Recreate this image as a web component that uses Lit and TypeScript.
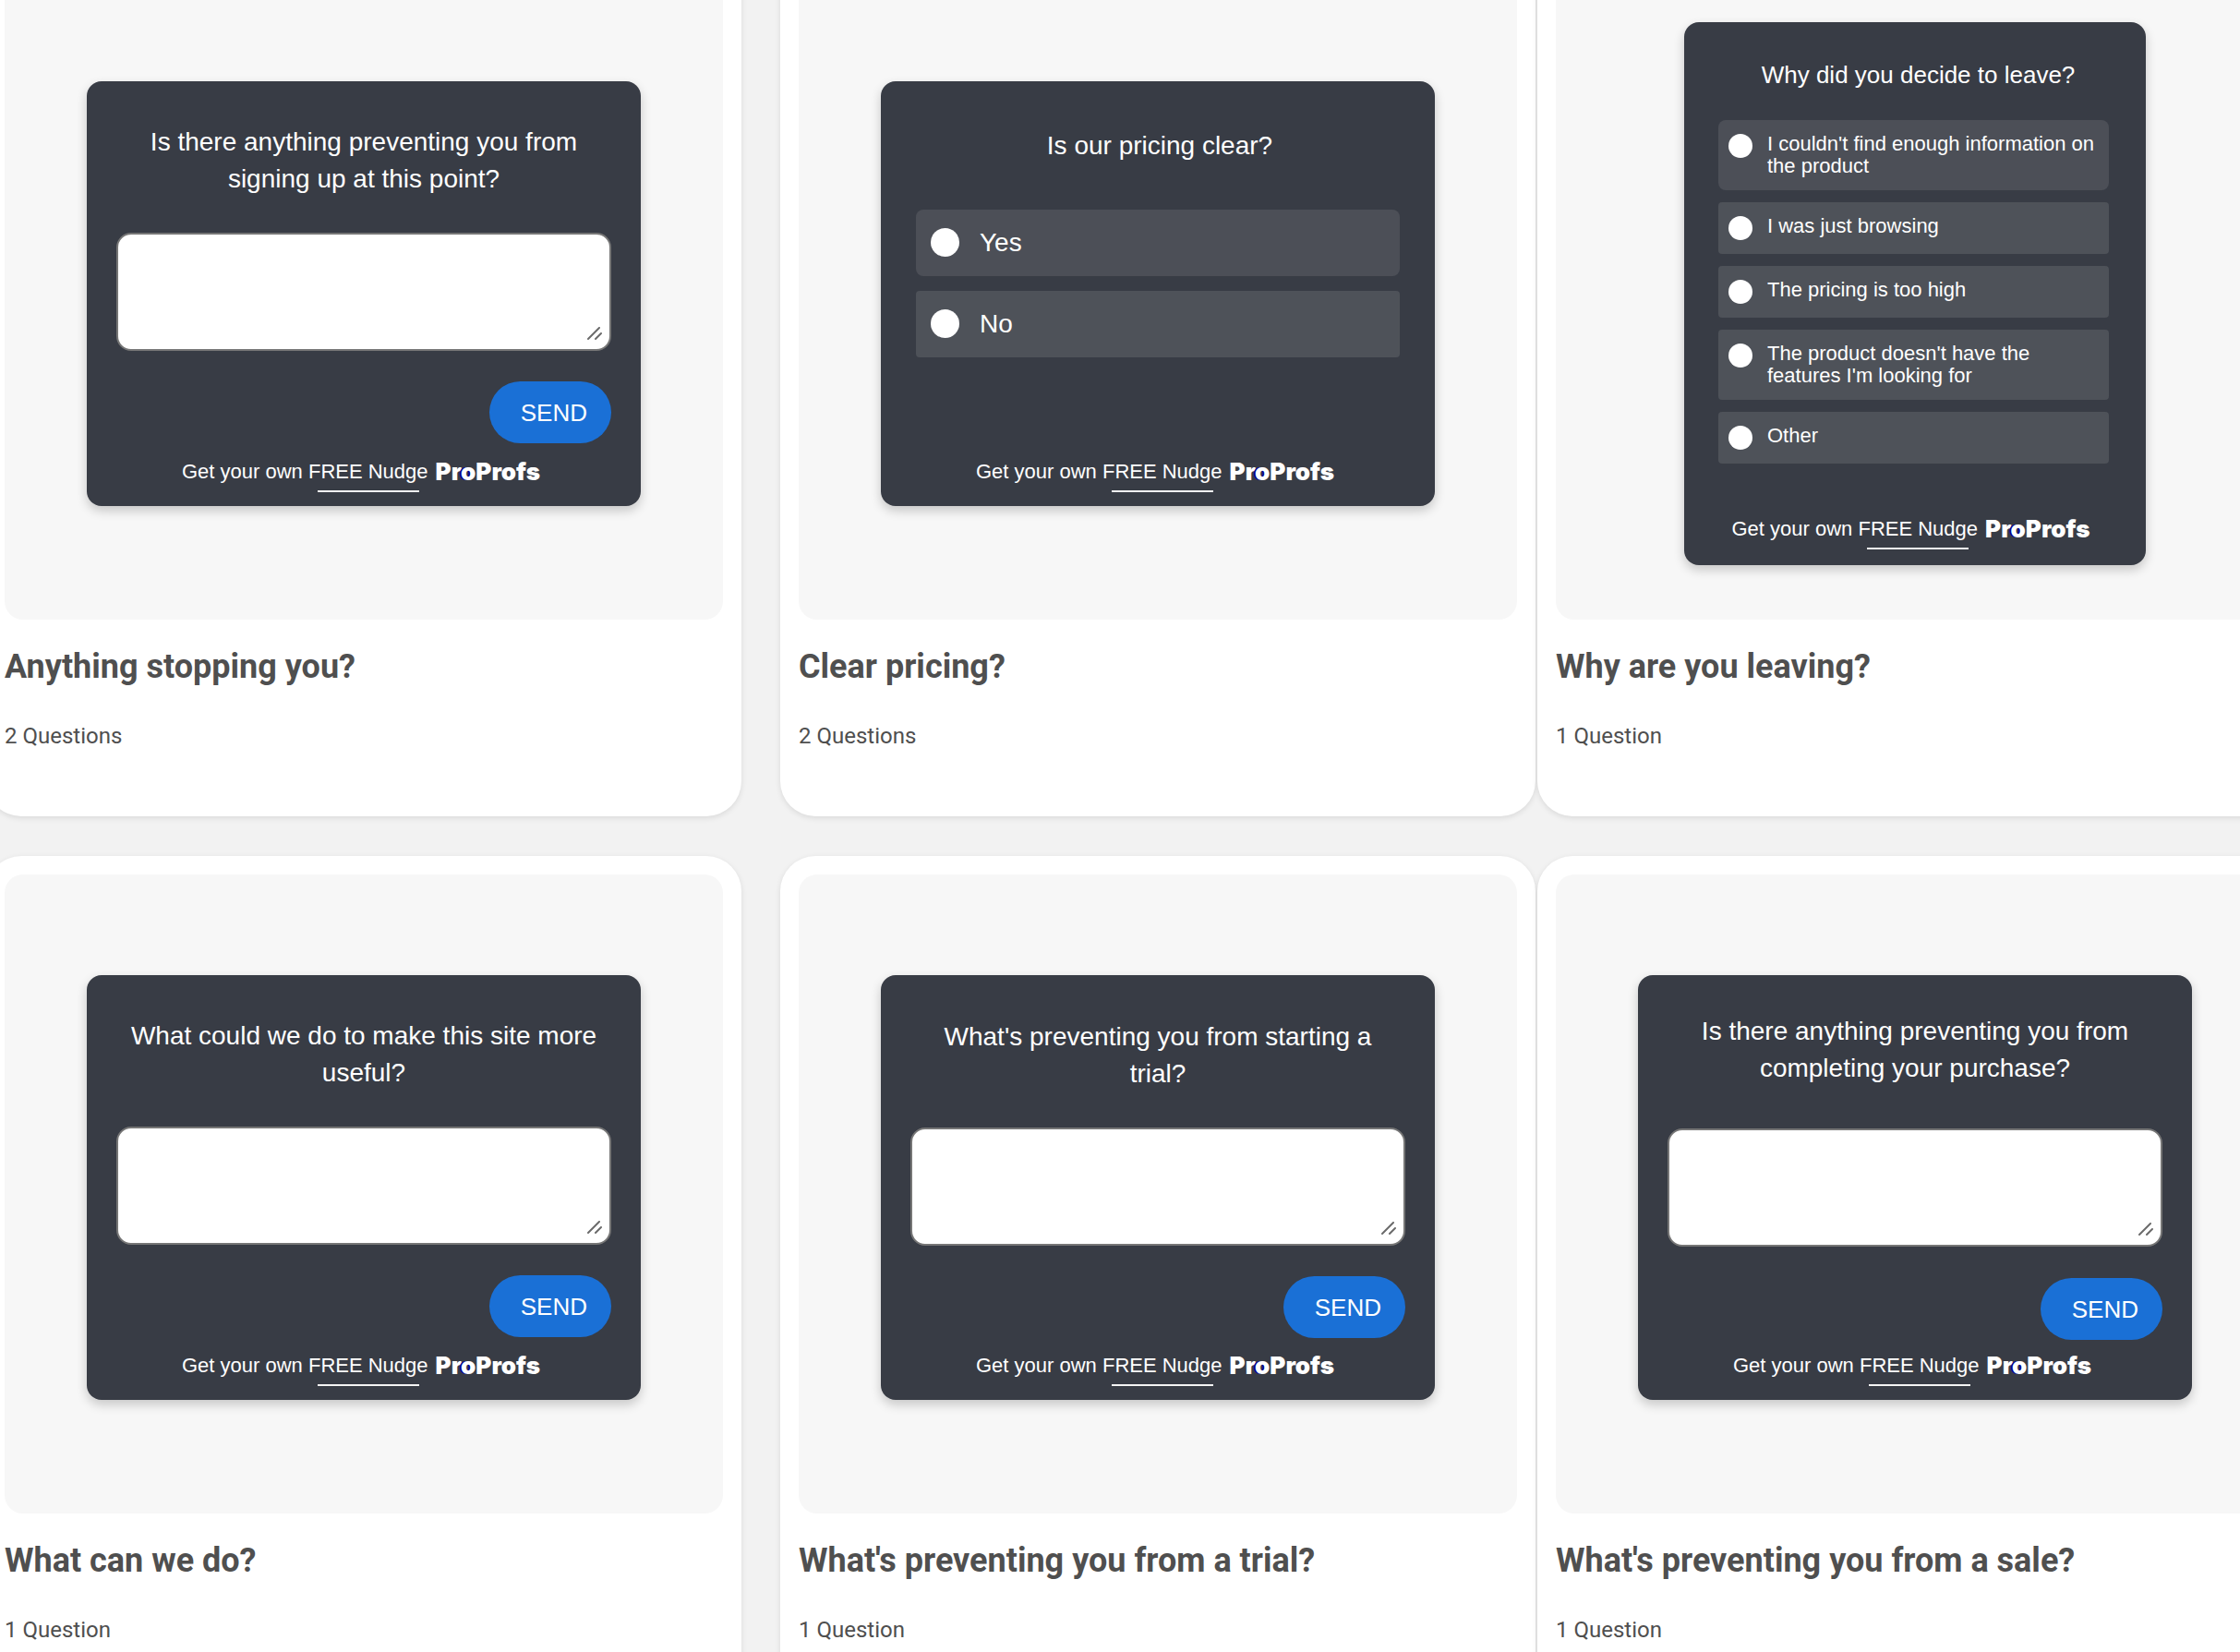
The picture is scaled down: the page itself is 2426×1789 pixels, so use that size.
import { LitElement, html, css } from "lit";
import { customElement, property } from "lit/decorators.js";
import { classMap } from "lit/directives/class-map.js";

interface Template {
  id: string;
  title: string;
  count: string;
  question: string;
  variant?: "high" | "low" | "compact" | "choice";
  options?: string[];
}

const TEMPLATES: Template[] = [
  {
    id: "stopping",
    title: "Anything stopping you?",
    count: "2 Questions",
    question: "Is there anything preventing you from signing up at this point?",
  },
  {
    id: "pricing",
    title: "Clear pricing?",
    count: "2 Questions",
    question: "Is our pricing clear?",
    variant: "choice",
    options: ["Yes", "No"],
  },
  {
    id: "leaving",
    title: "Why are you leaving?",
    count: "1 Question",
    question: "Why did you decide to leave?",
    variant: "compact",
    options: [
      "I couldn't find enough information on the product",
      "I was just browsing",
      "The pricing is too high",
      "The product doesn't have the features I'm looking for",
      "Other",
    ],
  },
  {
    id: "useful",
    title: "What can we do?",
    count: "1 Question",
    question: "What could we do to make this site more useful?",
  },
  {
    id: "trial",
    title: "What's preventing you from a trial?",
    count: "1 Question",
    question: "What's preventing you from starting a trial?",
    variant: "low",
  },
  {
    id: "sale",
    title: "What's preventing you from a sale?",
    count: "1 Question",
    question: "Is there anything preventing you from completing your purchase?",
    variant: "high",
  },
];

@customElement("nudge-popup")
export class NudgePopup extends LitElement {
  @property({ attribute: false }) template!: Template;

  static styles = css`
    :host {
      display: block;
    }
    .popup {
      box-sizing: border-box;
      display: flex;
      flex-direction: column;
      width: 600px;
      min-height: 460px;
      padding: 46px 32px 15px;
      border-radius: 16px;
      background: #383c45;
      box-shadow: 0 5px 12px rgba(0, 0, 0, 0.2);
      color: #fff;
      font-family: "Liberation Sans", Arial, sans-serif;
    }
    .question {
      margin: 0;
      min-height: 80px;
      padding: 0 8px;
      font-size: 28px;
      font-weight: 400;
      line-height: 40px;
      text-align: center;
    }
    .answer {
      position: relative;
      display: flex;
      margin-top: 38px;
    }
    .field {
      box-sizing: border-box;
      width: 100%;
      height: 128px;
      padding: 12px;
      border: 2px solid #767676;
      border-radius: 16px;
      background: #fff;
      font: 24px/32px "Liberation Sans", Arial, sans-serif;
      resize: none;
    }
    .grip {
      position: absolute;
      right: 10px;
      bottom: 11px;
      width: 16px;
      height: 15px;
      pointer-events: none;
    }
    .send {
      align-self: flex-end;
      height: 67px;
      margin-top: 33px;
      padding: 0 26px 0 34px;
      border: 0;
      border-radius: 34px;
      background: #1a70d6;
      color: #fff;
      font: 26px/30px "Liberation Sans", Arial, sans-serif;
    }
    .options {
      display: flex;
      flex-direction: column;
      gap: 16px;
      margin: 0;
      padding: 0;
      border: 0;
    }
    .option {
      display: flex;
      align-items: flex-start;
      gap: 22px;
      padding: 20px 16px;
      border-radius: 4px;
      background: #4e5259;
      font-size: 28px;
      line-height: 32px;
    }
    .option:first-child {
      border-radius: 8px;
      background: #4c4f57;
    }
    .radio {
      appearance: none;
      flex: none;
      width: 31px;
      height: 31px;
      margin: 0;
      border-radius: 50%;
      background: #fff;
    }
    .footer {
      display: flex;
      align-items: flex-start;
      justify-content: center;
      gap: 8px;
      margin-top: auto;
      padding-right: 6px;
      font-size: 22px;
      line-height: 28px;
    }
    .link {
      color: inherit;
      text-decoration: none;
    }
    .free {
      display: inline-flex;
      flex-direction: column;
      align-items: center;
      gap: 6px;
    }
    .free::after {
      content: "";
      width: 110px;
      height: 2px;
      background: #f4f4f4;
    }
    .logo {
      font-family: Inter, sans-serif;
      font-size: 26px;
      font-weight: 900;
    }
    .dot {
      text-shadow: -2px 0 0 #00008b;
    }
    .low {
      padding-top: 47px;
    }
    .high {
      padding-top: 41px;
    }
    .high .answer {
      margin-top: 45px;
    }
    .high .send {
      margin-top: 34px;
    }
    .choice {
      padding: 50px 38px 15px;
    }
    .choice .question {
      min-height: 89px;
      padding: 0 6px 0 10px;
    }
    .compact {
      width: 500px;
      min-height: 588px;
      padding: 37px 40px 17px 37px;
    }
    .compact .question {
      min-height: 69px;
      padding: 0 0 0 10px;
      font-size: 26px;
    }
    .compact .options {
      gap: 13px;
    }
    .compact .option {
      gap: 16px;
      padding: 15px 11px;
      font-size: 22px;
      line-height: 24px;
    }
    .compact .text {
      margin: -1px 0;
    }
    .compact .radio {
      width: 26px;
      height: 26px;
    }
  `;

  private optionList(options: string[]) {
    return html`
      <fieldset class="options" aria-labelledby="question">
        ${options.map(
          (option) => html`
            <label class="option">
              <input class="radio" type="radio" name=${this.template.id} />
              <span class="text">${option}</span>
            </label>
          `,
        )}
      </fieldset>
    `;
  }

  private answerForm() {
    return html`
      <div class="answer">
        <textarea class="field" aria-labelledby="question"></textarea>
        <svg class="grip" viewBox="0 0 16 15" aria-hidden="true">
          <path d="M1 13 13 1M9 13 15 7" fill="none" stroke="#6b6b6b" stroke-width="2" stroke-linecap="round" />
        </svg>
      </div>
      <button class="send" type="button">SEND</button>
    `;
  }

  render() {
    const { question, options, variant } = this.template;
    return html`
      <section class=${classMap({ popup: true, [variant ?? "plain"]: true })}>
        <h3 class="question" id="question">${question}</h3>
        ${options ? this.optionList(options) : this.answerForm()}
        <div class="footer">
          <a class="link" href="#">Get your own <span class="free">FREE Nudge</span></a>
          <span class="logo">Pr<span class="dot">o</span>Profs</span>
        </div>
      </section>
    `;
  }
}

@customElement("app-root")
export class AppRoot extends LitElement {
  static styles = css`
    :host {
      display: block;
      height: 100vh;
      overflow: hidden;
      background: #f2f2f2;
    }
    .gallery {
      display: grid;
      grid-template-columns: minmax(0, 1fr) 42px minmax(0, 1fr) 2px minmax(0, 1fr);
      row-gap: 43px;
      margin: -41px -57px 0 -15px;
    }
    .card {
      box-sizing: border-box;
      min-height: 925px;
      padding: 20px;
      border-radius: 38px;
      background: #fff;
      box-shadow: 0 2px 6px rgba(0, 0, 0, 0.1);
      color: #4f4f4f;
      font-family: Roboto, sans-serif;
    }
    .card:nth-child(3n + 1) {
      grid-column: 1;
    }
    .card:nth-child(3n + 2) {
      grid-column: 3;
    }
    .card:nth-child(3n) {
      grid-column: 5;
    }
    .preview {
      box-sizing: border-box;
      display: flex;
      align-items: center;
      justify-content: center;
      min-height: 692px;
      padding-bottom: 14px;
      border-radius: 20px;
      background: #f7f7f7;
    }
    .title {
      margin: 31px 0 0;
      font-size: 36px;
      font-weight: 700;
      line-height: 40px;
    }
    .count {
      margin: 41px 0 0;
      font-size: 24px;
      line-height: 28px;
    }
  `;

  render() {
    return html`
      <main class="gallery">
        ${TEMPLATES.map(
          (template) => html`
            <article class="card">
              <div class="preview"><nudge-popup .template=${template}></nudge-popup></div>
              <h2 class="title">${template.title}</h2>
              <p class="count">${template.count}</p>
            </article>
          `,
        )}
      </main>
    `;
  }
}
